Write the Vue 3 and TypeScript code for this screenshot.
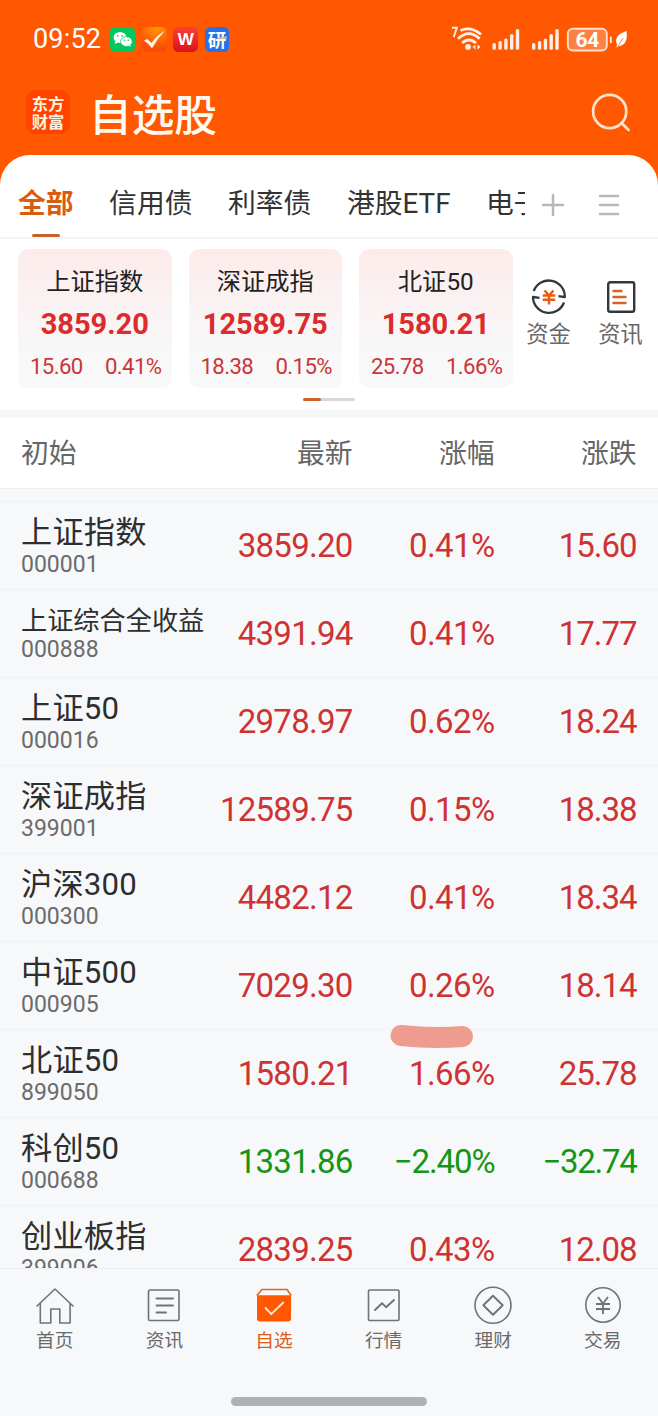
<script setup lang="ts">
interface IndexCard { name: string; value: string; change: string; pct: string }
interface Stock { name: string; code: string; price: string; pct: string; change: string; small?: boolean; down?: boolean }

const tabs: string[] = ['全部', '信用债', '利率债', '港股ETF', '电子']

const cards: IndexCard[] = [
  { name: '上证指数', value: '3859.20', change: '15.60', pct: '0.41%' },
  { name: '深证成指', value: '12589.75', change: '18.38', pct: '0.15%' },
  { name: '北证50', value: '1580.21', change: '25.78', pct: '1.66%' },
]

const stocks: Stock[] = [
  { name: '上证指数', code: '000001', price: '3859.20', pct: '0.41%', change: '15.60' },
  { name: '上证综合全收益', code: '000888', price: '4391.94', pct: '0.41%', change: '17.77', small: true },
  { name: '上证50', code: '000016', price: '2978.97', pct: '0.62%', change: '18.24' },
  { name: '深证成指', code: '399001', price: '12589.75', pct: '0.15%', change: '18.38' },
  { name: '沪深300', code: '000300', price: '4482.12', pct: '0.41%', change: '18.34' },
  { name: '中证500', code: '000905', price: '7029.30', pct: '0.26%', change: '18.14' },
  { name: '北证50', code: '899050', price: '1580.21', pct: '1.66%', change: '25.78' },
  { name: '科创50', code: '000688', price: '1331.86', pct: '−2.40%', change: '−32.74', down: true },
  { name: '创业板指', code: '399006', price: '2839.25', pct: '0.43%', change: '12.08' },
]

const navItems: string[] = ['首页', '资讯', '自选', '行情', '理财', '交易']
</script>

<template>
  <div class="screen">
    <header class="top">
      <div class="status">
        <span class="time">09:52</span>
        <div class="apps">
          <svg width="25" height="25" viewBox="0 0 25 25">
            <rect width="25" height="25" rx="5.5" fill="#06c75e" />
            <ellipse cx="10" cy="10.4" rx="6.4" ry="5.5" fill="#fff" />
            <path d="M5.4 14l-.6 3 3-1.6z" fill="#fff" />
            <ellipse cx="16.4" cy="14.6" rx="5.8" ry="4.9" fill="#fff" stroke="#06c75e" stroke-width=".8" />
            <path d="M18 18.4l2.6 1.4-.4-2.6z" fill="#fff" />
            <g fill="#06c75e"><circle cx="7.8" cy="8.8" r=".9" /><circle cx="12.1" cy="8.8" r=".9" /><circle cx="14.6" cy="13.3" r=".8" /><circle cx="18.2" cy="13.3" r=".8" /></g>
          </svg>
          <svg width="25" height="25" viewBox="0 0 25 25">
            <defs>
              <radialGradient id="glow" cx=".6" cy="0" r=".9"><stop offset="0" stop-color="#ff9a08" /><stop offset="1" stop-color="#fb4a06" /></radialGradient>
            </defs>
            <rect width="25" height="25" rx="5.5" fill="url(#glow)" />
            <path d="M2 13.500l3.200-1.400 4.300 3.800Q15 8 22.600 4 15.500 11.500 10 21.200 6.500 16.500 2 13.500z" fill="#fff3e6" />
          </svg>
          <span class="app-w">W</span>
          <span class="app-research">研<i></i></span>
        </div>
        <svg class="signals" width="180" height="30" viewBox="0 0 180 30">
          <g fill="none" stroke="#fff" stroke-opacity=".92" stroke-linecap="butt">
            <path d="M3 2.800H7.900L4.700 12" stroke-width="1.900" />
            <path d="M11.500 5.500Q22 1 32 9.500" stroke-width="2.700" />
            <path d="M9 13.700Q20 3.500 30.500 13.700" stroke-width="2.700" />
            <path d="M13 18Q20 12 27 18" stroke-width="2.700" />
          </g>
          <g fill="#fff" fill-opacity=".9">
            <circle cx="19" cy="22" r="2.900" />
            <path d="M23.500 22l3-2.600v5.200zM31.500 22l-3-2.600v5.200z" />
            <g v-for="x in [43.5, 83]" :key="x">
              <rect :x="x" y="18" width="3.400" height="6.800" rx="1.600" />
              <rect :x="x + 5.900" y="16" width="3.400" height="8.800" rx="1.600" />
              <rect :x="x + 11.700" y="13.500" width="3.400" height="11.300" rx="1.600" />
              <rect :x="x + 17.500" y="9" width="3.400" height="15.800" rx="1.600" />
              <rect :x="x + 23.300" y="4" width="3.400" height="20.800" rx="1.600" />
            </g>
          </g>
          <rect x="118.800" y="3.800" width="39" height="21.700" rx="5" fill="#ff8142" stroke="#ffe0ce" stroke-width="1.900" />
          <path d="M161.800 12.500v4.800" stroke="#ffe6d8" stroke-width="2" stroke-linecap="round" />
          <path d="M177.500 6C168.500 9 165.500 13.500 168 19.500L167.500 22.500 170 21.300C177.500 20 178.500 13 177.500 6z" fill="#fff" />
          <path d="M168.500 22l5.500-9" stroke="#ff7a30" stroke-width=".9" />
          <text x="138.300" y="22" text-anchor="middle" class="battery">64</text>
        </svg>
      </div>
      <div class="brand">
        <div class="logo"><span>东方</span><span>财富</span></div>
        <h1>自选股</h1>
        <svg class="search" width="44" height="44" viewBox="0 0 44 44">
          <g fill="none" stroke="#ffe3cb" stroke-width="2.700" stroke-linecap="round"><circle cx="20.700" cy="20.500" r="16.600" /><path d="M33 32.500l6.500 6.500" /></g>
        </svg>
      </div>
    </header>

    <section class="panel">
      <div class="tabbar">
        <div class="tabs">
          <span v-for="(t, i) in tabs" :key="t" class="tab" :class="{ active: i === 0 }">{{ t }}</span>
        </div>
        <svg width="120" height="40" viewBox="0 0 120 40">
          <g fill="none" stroke="#b8b8b8" stroke-width="2.500" stroke-linecap="round">
            <path d="M18 22h20M28 12v20" /><path d="M75 13h18M75 22h18M75 31h18" />
          </g>
        </svg>
      </div>
      <div class="indices">
        <article v-for="c in cards" :key="c.name" class="card">
          <div class="card-name">{{ c.name }}</div>
          <div class="card-value">{{ c.value }}</div>
          <div class="card-foot"><span>{{ c.change }}</span><span>{{ c.pct }}</span></div>
        </article>
        <div class="quick">
          <svg width="40" height="40" viewBox="0 0 40 40">
            <g fill="none" stroke="#33363a" stroke-width="2.300" stroke-linejoin="round">
              <path d="M4.800 14A16 16 0 0 1 35.800 20.200L29.500 19.200" /><path d="M35 25.500A16 16 0 0 1 4 20L10.500 20.800" />
            </g>
            <path d="M15.500 13.500l4.500 5 4.500-5M13.800 18.500h12.400M13.800 22.800h12.400M20 18v9.500" fill="none" stroke="#e85d10" stroke-width="2.500" />
          </svg>
          <span>资金</span>
        </div>
        <div class="quick">
          <svg width="40" height="40" viewBox="0 0 40 40">
            <rect x="7.200" y="5.200" width="26" height="29.600" rx="2" fill="none" stroke="#33363a" stroke-width="2.400" />
            <path d="M12.500 14h8M12.500 20h12M12.500 26h12" stroke="#dc6222" stroke-width="2.500" stroke-linecap="round" />
          </svg>
          <span>资讯</span>
        </div>
      </div>
      <div class="pager"><i></i></div>
    </section>

    <div class="table-head"><span>初始</span><span>最新</span><span>涨幅</span><span>涨跌</span></div>

    <main class="list">
      <div v-for="s in stocks" :key="s.code" class="row" :class="{ down: s.down }">
        <div class="ident">
          <div class="name" :class="{ small: s.small }">{{ s.name }}</div>
          <div class="code">{{ s.code }}</div>
        </div>
        <span class="num">{{ s.price }}</span><span class="num pct">{{ s.pct }}</span><span class="num change">{{ s.change }}</span>
      </div>
      <svg class="marker" width="90" height="30" viewBox="0 0 90 30">
        <path d="M15 13.500Q46 16.800 76.500 14.500" fill="none" stroke="#ee9c90" stroke-width="21" stroke-linecap="round" />
      </svg>
    </main>

    <nav class="nav">
      <div class="nav-items">
        <div v-for="(n, i) in navItems" :key="n" class="nav-item" :class="{ active: i === 2 }">
          <svg width="42" height="42" viewBox="0 0 42 42" fill="none" stroke="#707274" stroke-width="1.600" stroke-linejoin="round">
            <path v-if="i === 0" d="M2.500 21.500L21 4l18.500 17.500M6.300 18v20h10.500V24h9v14h10.300V18" />
            <template v-else-if="i === 1"><rect x="5.500" y="5" width="30.500" height="30.500" rx="1.500" /><path d="M13.500 13.500H30M13.500 20.500H30M13.500 27.500H23" stroke-width="1.900" stroke-linecap="round" /></template>
            <template v-else-if="i === 2"><path d="M3.800 10.500L9 4.500h25l4.200 6" stroke="#e8641c" /><path d="M4 10.200h34V33.500q0 3-3 3H7q-3 0-3-3z" fill="#ff5800" stroke="none" /><path d="M12.500 23l5.800 6 12-11.500" stroke="#ffe8d6" stroke-width="1.800" stroke-linecap="round" /></template>
            <template v-else-if="i === 3"><rect x="5.500" y="5" width="30.500" height="30.500" rx="1.200" /><path d="M12 25l7-6.800 4 4L31 15" stroke-width="1.900" stroke-linecap="round" /></template>
            <template v-else-if="i === 4"><circle cx="21" cy="20.300" r="18" /><path d="M21 10.800l9.700 9.500L21 29.800l-9.700-9.500z" stroke-width="1.900" /></template>
            <template v-else><circle cx="21" cy="20" r="17.200" /><path d="M16 12l5 6.500 5-6.500M14 19h14M14 24h14M21 18.500V29" stroke-width="1.900" /></template>
          </svg>
          <span>{{ n }}</span>
        </div>
      </div>
      <div class="home-bar"></div>
    </nav>
  </div>
</template>

<style>
body { background: #f7f8fa; }
</style>

<style scoped>
* { box-sizing: border-box; }
.screen { width: 658px; height: 1416px; display: flex; flex-direction: column; overflow: hidden; background: #ff5800; font-family: Roboto, "Noto Sans CJK SC", sans-serif; color: #2d2e30; }
.top { height: 155px; flex: none; color: #fff; }
.status { height: 76px; padding: 0 29px 0 33px; display: flex; align-items: center; }
.time { font-size: 27px; width: 77px; line-height: 30px; letter-spacing: 0.2px; padding-top: 2px; white-space: nowrap; }
.apps { display: flex; gap: 6.700px; padding-top: 2px; }
.apps svg { display: block; }
.app-w { width: 25px; height: 25px; border-radius: 5.500px; background: linear-gradient(#fb4036, #d9121c); font: 700 17px/25px "Liberation Sans", sans-serif; text-align: center; }
.app-research { width: 24px; height: 25px; border-radius: 5.500px; background: #2471e8; font: 700 18.500px/24px "Noto Sans CJK SC", sans-serif; text-align: center; position: relative; }
.app-research i { position: absolute; right: 2px; top: 10px; width: 9px; height: 2px; background: #d9c27c; transform: rotate(-6deg); }
.signals { margin: 3px 0 0 auto; }
.battery { font: 700 21px Roboto, sans-serif; fill: #fff; letter-spacing: -0.3px; }
.brand { display: flex; align-items: center; height: 72px; padding: 0 25px 0 26px; }
.logo { width: 44px; height: 44px; border-radius: 9px; background: #ff4300; font: 700 16.300px/18px "Noto Sans CJK SC", sans-serif; display: flex; flex-direction: column; align-items: center; justify-content: center; color: #fff0df; }
h1 { margin: 0 0 0 19px; font: 500 42.700px/60px "Noto Sans CJK SC", sans-serif; color: #fffaf0; }
.search { margin: 2px 0 0 auto; }

.panel { height: 255px; flex: none; background: #fff; border-radius: 30px 30px 0 0; }
.tabbar { height: 83.500px; border-bottom: 2px solid #f3f4f5; display: flex; align-items: center; padding-top: 14px; }
.tabs { width: 525px; height: 69px; flex: none; padding-left: 18px; display: flex; gap: 35.500px; overflow: hidden; white-space: nowrap; font-size: 27.800px; line-height: 72px; }
.tab { flex: none; color: #333; }
.tab.active { color: #d95c10; font-weight: 700; display: flex; flex-direction: column; align-items: center; }
.tab.active::after { content: ''; width: 28px; height: 3.500px; border-radius: 2px; background: #c8622a; margin-top: -6px; }
.indices { display: flex; padding: 10.500px 0 0 18px; height: 150px; }
.card { width: 153.500px; height: 139px; flex: none; margin-right: 17px; border-radius: 11px; background: linear-gradient(#fdebeb, #f8f8f9 75%); text-align: center; padding-top: 15px; white-space: nowrap; }
.card-name { font-size: 24.300px; line-height: 36px; color: #222; }
.card-value { font-size: 29px; font-weight: 700; line-height: 44px; margin-top: 2px; color: #da2c2c; }
.card-foot { display: flex; justify-content: space-between; padding: 0 10px 0 12px; margin-top: 5px; font-size: 22.200px; line-height: 30px; letter-spacing: -0.600px; color: #c93636; }
.quick { width: 72px; flex: none; display: flex; flex-direction: column; align-items: center; padding-top: 28px; font-size: 22.200px; line-height: 35px; color: #686868; }
.quick svg { display: block; }
.card + .quick { margin-left: -17px; }
.pager { width: 52px; height: 3.500px; margin: 9px 0 0 303px; background: #d6d8dc; border-radius: 2px; }
.pager i { display: block; width: 18px; height: 100%; background: #c8622a; border-radius: 2px; }

.table-head { flex: none; height: 79px; border-top: 8px solid #f6f7f9; border-bottom: 1px solid #eceef0; background: #fff; display: grid; grid-template-columns: 200px 152.500px 142px 142px; padding-top: 16px; font-size: 27.800px; line-height: 40px; color: #666; }
.table-head span { text-align: right; }
.table-head span:first-child { text-align: left; padding-left: 21px; }
.list { height: 779px; flex: none; overflow: hidden; position: relative; background: #f7f8fa; padding-top: 12px; }
.row { height: 88px; border-top: 1px solid #f0f1f3; display: grid; grid-template-columns: 200px 152.500px 142px 142px; white-space: nowrap; }
.ident { padding: 10px 0 0 21px; }
.name { font-size: 31.200px; line-height: 42px; height: 39px; letter-spacing: 0.200px; }
.name.small { font-size: 26.200px; line-height: 42px; height: 36px; letter-spacing: 0; }
.code { font-size: 23px; line-height: 28px; color: #6b6b6b; }
.num { font-size: 33px; line-height: 88px; text-align: right; color: #cf3232; letter-spacing: -0.750px; }
.num.pct { letter-spacing: -0.600px; }
.num.change { letter-spacing: -1.050px; }
.down .num { color: #149614; }
.down .num.pct { letter-spacing: -1.100px; }
.down .num.change { letter-spacing: -1.300px; }
.marker { position: absolute; left: 386px; top: 533px; }

.nav { height: 148px; flex: none; background: #f7f8fa; border-top: 1.500px solid #eceef0; }
.nav-items { display: grid; grid-template-columns: repeat(6, 109.600px); padding-top: 16px; }
.nav-item { display: flex; flex-direction: column; align-items: center; font-size: 18.700px; line-height: 28px; color: #686a6c; }
.nav-item svg { display: block; }
.nav-item.active { color: #d9601c; }
.home-bar { width: 196px; height: 9px; border-radius: 5px; background: #b0b1b3; margin: 42px auto 0; }
</style>
